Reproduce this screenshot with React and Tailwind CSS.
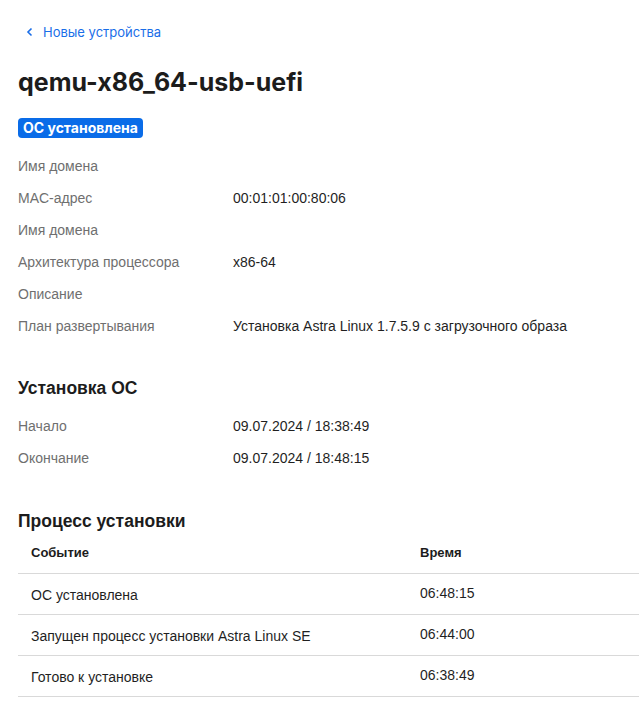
import React from 'react';

const info = [
  ['Имя домена', ''],
  ['MAC-адрес', '00:01:01:00:80:06'],
  ['Имя домена', ''],
  ['Архитектура процессора', 'x86-64'],
  ['Описание', ''],
  ['План развертывания', 'Установка Astra Linux 1.7.5.9 с загрузочного образа'],
];

const install = [
  ['Начало', '09.07.2024 / 18:38:49'],
  ['Окончание', '09.07.2024 / 18:48:15'],
];

const events = [
  ['ОС установлена', '06:48:15'],
  ['Запущен процесс установки Astra Linux SE', '06:44:00'],
  ['Готово к установке', '06:38:49'],
];

const arial = { fontFamily: '"Liberation Sans", Arial, sans-serif' };
const inter = { fontFamily: 'Inter, sans-serif' };

function InfoRow({ label, value }) {
  return (
    <div className="flex h-8 items-center text-sm">
      <div className="w-[215px] shrink-0 text-[#6f6f6f]">{label}</div>
      <div className="text-[#1f1f1f]">{value}</div>
    </div>
  );
}

export default function App() {
  return (
    <div className="min-h-[711px] bg-white pl-[18px] pt-[22px]" style={arial}>
      <a className="flex items-center gap-[8px] pl-[7px] text-[13px] leading-5 text-[#1a6ee8]" style={inter}>
        <svg width="10" height="10" viewBox="0 0 10 10" fill="none" stroke="currentColor" strokeWidth="1.6">
          <path d="M6.5 1.5 3 5l3.5 3.5" />
        </svg>
        Новые устройства
      </a>

      <h1 className="mt-[24px] text-[25px] font-bold leading-8 text-[#1c1c1c]" style={inter}>
        qemu-x86_64-usb-uefi
      </h1>

      <span
        className="mt-[20px] inline-block rounded-[4px] bg-[#0a6ce8] px-[5px] text-sm font-bold leading-5 text-white"
        style={inter}
      >
        ОС установлена
      </span>

      <div className="mt-[10px]">
        {info.map(([l, v], i) => (
          <InfoRow key={i} label={l} value={v} />
        ))}
      </div>

      <h2 className="mt-[34px] text-[17.5px] font-bold leading-6 text-[#1c1c1c]">Установка ОС</h2>
      <div className="mt-[10px]">
        {install.map(([l, v], i) => (
          <InfoRow key={i} label={l} value={v} />
        ))}
      </div>

      <h2 className="mt-[35px] text-[17.5px] font-bold leading-6 text-[#1c1c1c]">Процесс установки</h2>
      <div className="mt-[4px]">
        <div className="flex h-[37px] items-start border-b border-[#d9d9d9] pl-[13px] pt-[8px] text-[13px] font-bold leading-4 text-[#1c1c1c]">
          <div className="w-[389px]">Событие</div>
          <div>Время</div>
        </div>
        {events.map(([e, t], i) => (
          <div key={i} className="flex h-[41px] items-center border-b border-[#d9d9d9] pl-[13px] text-sm text-[#1f1f1f]">
            <div className="w-[389px] pt-[2px]">{e}</div>
            <div className="-mt-[2px]">{t}</div>
          </div>
        ))}
      </div>
    </div>
  );
}
